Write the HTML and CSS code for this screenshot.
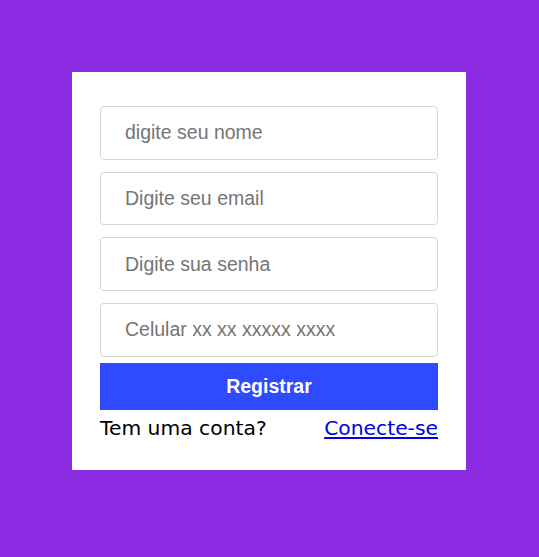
FILE: index.html
```html
<!DOCTYPE html>
<html lang="pt">
<head>
<meta charset="utf-8">
<link rel="stylesheet" href="styles.css">
</head>
<body>
<div class="page">
  <form class="card">
    <input class="field" type="text" placeholder="digite seu nome">
    <input class="field" type="email" placeholder="Digite seu email">
    <input class="field" type="password" placeholder="Digite sua senha">
    <input class="field" type="tel" placeholder="Celular xx xx xxxxx xxxx">
    <button class="submit" type="button">Registrar</button>
    <div class="footer">
      <span class="question">Tem uma conta?</span>
      <a class="link" href="#">Conecte-se</a>
    </div>
  </form>
</div>
</body>
</html>
```
FILE: styles.css
```css
html, body {
  margin: 0;
  padding: 0;
}
body {
  background: #8a2be2;
  width: 539px;
  height: 557px;
}
.page {
  padding-top: 72px;
  padding-left: 72px;
}
.card {
  box-sizing: border-box;
  width: 394px;
  height: 398px;
  background: #fff;
  padding: 34px 28px 28px;
  display: flex;
  flex-direction: column;
}
.field {
  box-sizing: border-box;
  height: 53.7px;
  flex: none;
  margin-bottom: 12px;
  border: 1px solid #d6d6d6;
  border-radius: 4px;
  padding: 0 24px;
  font-family: "Liberation Sans", Arial, sans-serif;
  font-size: 19.5px;
  color: #333;
  outline: none;
}
.field:nth-of-type(4) {
  margin-bottom: 6px;
}
.field::placeholder {
  color: #757575;
}
.submit {
  height: 47px;
  flex: none;
  border: none;
  background: #2e4bff;
  color: #fff;
  font-family: "Liberation Sans", Arial, sans-serif;
  font-weight: bold;
  font-size: 19.5px;
  padding: 0;
}
.footer {
  display: flex;
  justify-content: space-between;
  align-items: baseline;
  margin-top: 5px;
  font-family: "DejaVu Sans", Verdana, sans-serif;
  font-size: 20.3px;
  line-height: 26px;
}
.question {
  color: #000;
}
.link {
  color: #0000ee;
  text-decoration: underline;
}
```
